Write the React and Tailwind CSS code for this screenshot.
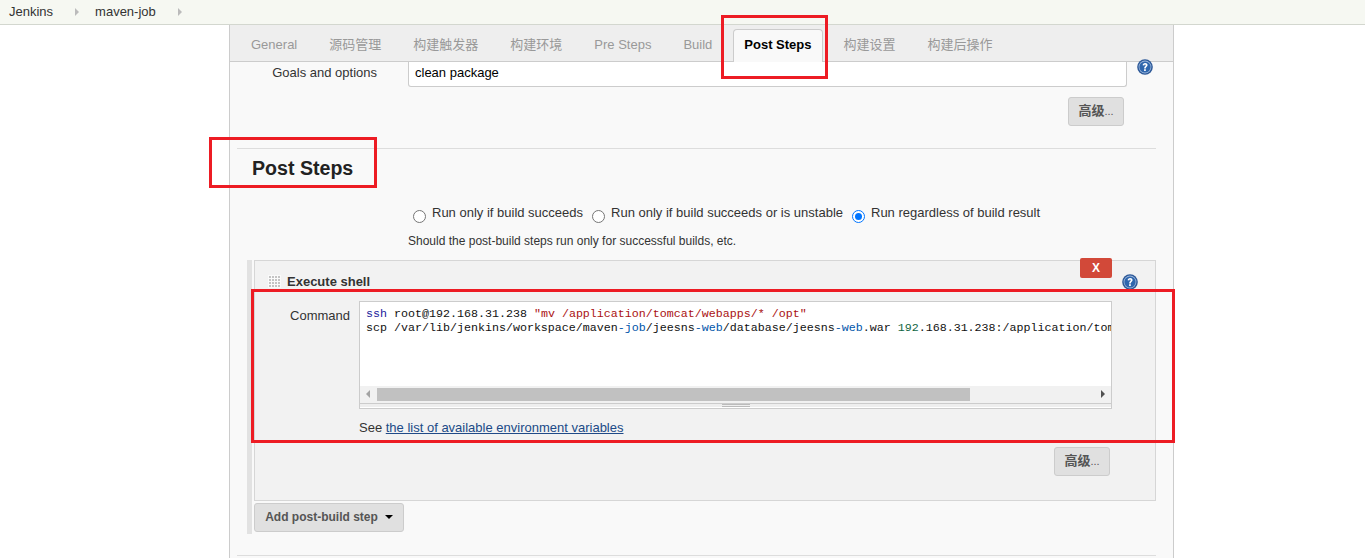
const tabs = ['General', '源码管理', '构建触发器', '构建环境', 'Pre Steps', 'Build', 'Post Steps', '构建设置', '构建后操作'];
const gripDots = [0, 1, 2, 3].flatMap(r => [0, 1, 2, 3].map(c => [c, r]));

function Help({ className = '' }) {
  return (
    <svg viewBox="0 0 16 16" className={`w-4 h-4 ${className}`}>
      <circle cx="8" cy="8" r="7.8" fill="#2b5797" />
      <circle cx="8" cy="8" r="6.4" fill="#9db8dc" />
      <circle cx="8" cy="8" r="5.6" fill="#2f66ad" />
      <path d="M5.6 6.3C5.6 4.8 6.7 3.9 8.1 3.9s2.5.9 2.5 2.2c0 1.8-1.8 1.8-1.8 3.3H7.1c0-2.1 1.6-2.2 1.6-3.2 0-.5-.2-.8-.7-.8-.5 0-.7.4-.7 1z" fill="#ffffff" />
      <rect x="7.1" y="10.2" width="1.7" height="1.8" fill="#ffffff" />
    </svg>
  );
}

function Radio({ label, checked }) {
  return (
    <div className="flex items-start">
      <span className={`mt-[5px] w-[13px] h-[13px] rounded-full border bg-white flex items-center justify-center ${checked ? 'border-[#0075ff]' : 'border-[#767676]'}`}>
        {checked && <span className="w-[7px] h-[7px] rounded-full bg-[#0075ff]" />}
      </span>
      <span className="ml-[6px] text-[#333] leading-[15px]">{label}</span>
    </div>
  );
}

function AdvButton() {
  return (
    <button className="block w-[56px] h-[29px] pb-[2px] rounded-[3px] border border-[#ccc] bg-[#e0e0e0] text-[#555] text-[13px] font-bold">
      高级<span className="text-[11px] font-normal">...</span>
    </button>
  );
}

export default function App() {
  return (
    <div className="relative h-[558px] overflow-hidden bg-white text-[13px] font-['Liberation_Sans','Noto_Sans_CJK_SC',sans-serif]">
      <div className="h-[25px] bg-[#f6f8f2] border-b border-[#d3d7cf] flex items-center pl-[9px] text-[#333]">
        <span>Jenkins</span>
        <span className="ml-[22px] w-0 h-0 border-y-[4px] border-y-transparent border-l-[4px] border-l-[#bbb]" />
        <span className="ml-[16px]">maven-job</span>
        <span className="ml-[22px] w-0 h-0 border-y-[4px] border-y-transparent border-l-[4px] border-l-[#bbb]" />
      </div>

      <div className="ml-[229px] w-[945px] h-[533px] border-x border-[#ccc] bg-[#f9f9f9]">
        <div className="h-[37px] bg-[#eeeeee] border-b border-[#ccc] flex items-end pl-[5px]">
          {tabs.map(t => (
            t === 'Post Steps' ? (
              <div key={t} className="h-[33px] -mb-px mx-[5px] px-[10px] pt-[5px] bg-[#f9f9f9] border border-b-0 border-[#ccc] rounded-t-[4px] font-bold text-black">{t}</div>
            ) : (
              <div key={t} className="h-[32px] px-[16px] pt-[6px] text-[#999]">{t}</div>
            )
          ))}
        </div>

        <div className="pl-[7px] pr-[17px]">
          <div className="flex">
            <div className="w-[140px] text-right text-[#333] pt-[1px]">Goals and options</div>
            <div className="ml-[31px] w-[719px] h-[25px] bg-white border border-t-0 border-[#ccc] rounded-b-[3px] pl-[6px] pt-[1px] text-black">clean package</div>
            <Help className="ml-[10px] -mt-[3px]" />
          </div>
          <div className="flex justify-end mt-[10px] pr-[32px]">
            <AdvButton />
          </div>

          <div className="mt-[22px] border-t border-[#ddd] pl-[15px] pt-[6px] h-[47px]">
            <h2 className="text-[19.6px] font-bold text-[#222] leading-[26px]">Post Steps</h2>
          </div>

          <div className="mt-[10px] pl-[176px] flex gap-[9px] h-[17px]">
            <Radio label="Run only if build succeeds" />
            <Radio label="Run only if build succeeds or is unstable" />
            <Radio label="Run regardless of build result" checked />
          </div>
          <div className="mt-[10px] pl-[171px] text-[#333] text-[12px]">Should the post-build steps run only for successful builds, etc.</div>

          <div className="mt-[10px] ml-[10px] border-l-[5px] border-[#e2e2e2] pl-[2px] w-[909px] pb-[2px]">
            <div className="relative h-[241px] border border-[#d6d6d6] bg-[#f2f2f2]">
              <div className="flex items-center pl-[13px] pt-[11px]">
                <svg viewBox="0 0 13 13" className="w-[13px] h-[13px] bg-[#fafafa]">
                  {gripDots.map(([c, r]) => (
                    <rect key={`${c}-${r}`} x={c * 3 + 1} y={r * 3 + 1} width="2" height="2" fill="#c4c4c4" />
                  ))}
                </svg>
                <span className="ml-[6px] font-bold text-[#333]">Execute shell</span>
              </div>
              <button className="absolute right-[43px] top-[-3px] w-[32px] h-[20px] rounded-[2px] bg-[#d24939] text-white font-bold text-[12px]">X</button>
              <Help className="absolute right-[17px] top-[13px]" />

              <div className="flex mt-[9px]">
                <div className="w-[95px] text-right text-[#333] pt-[5px]">Command</div>
                <div className="ml-[9px] w-[753px]">
                  <div className="h-[108px] border border-[#ccc] bg-white flex flex-col">
                    <pre className="h-[85px] overflow-hidden pl-[6px] pt-[5px] text-[11.67px] leading-[14px] font-['Liberation_Mono',monospace] text-[#111]">
<span className="text-[#1a1a9c]">ssh</span> root@192.168.31.238 <span className="text-[#a11]">"mv /application/tomcat/webapps/* /opt"</span>{'\n'}scp /var/lib/jenkins/workspace/maven<span className="text-[#05a]">-job</span>/jeesns<span className="text-[#05a]">-web</span>/database/jeesns<span className="text-[#05a]">-web</span>.war <span className="text-[#164]">192</span>.168.31.238:/application/tom
                    </pre>
                    <div className="h-[17px] bg-[#f1f1f1] flex items-center">
                      <span className="ml-[6px] w-0 h-0 border-y-[4px] border-y-transparent border-r-[4px] border-r-[#a3a3a3]" />
                      <div className="ml-[7px] w-[593px] h-[13px] bg-[#c1c1c1]" />
                      <span className="ml-auto mr-[6px] w-0 h-0 border-y-[4px] border-y-transparent border-l-[4px] border-l-[#505050]" />
                    </div>
                    <div className="h-[5px] bg-[#eee] border-t border-[#ccc] flex justify-center items-center">
                      <div className="w-[28px] h-[3px] border-y border-[#bbb]" />
                    </div>
                  </div>
                  <div className="mt-[11px] text-[#333] leading-[16px]">See <a className="underline text-[#204a87]">the list of available environment variables</a></div>
                </div>
              </div>
              <div className="absolute right-[45px] top-[186px]"><AdvButton /></div>
            </div>
            <button className="mt-[2px] w-[150px] h-[29px] pb-[1px] rounded-[3px] border border-[#ccc] bg-[#e0e0e0] text-[#555] text-[12px] font-bold flex items-center justify-center gap-[7px]">
              Add post-build step
              <span className="w-0 h-0 border-x-[4px] border-x-transparent border-t-[4px] border-t-black" />
            </button>
          </div>
          <div className="mt-[21px] border-t border-[#ddd]" />
        </div>
      </div>

      <div className="absolute left-[721px] top-[15px] w-[107px] h-[64px] border-[3px] border-[#ed1c24]" />
      <div className="absolute left-[209px] top-[137px] w-[168px] h-[51px] border-[3px] border-[#ed1c24]" />
      <div className="absolute left-[251px] top-[289px] w-[924px] h-[154px] border-[3px] border-[#ed1c24]" />
    </div>
  );
}
